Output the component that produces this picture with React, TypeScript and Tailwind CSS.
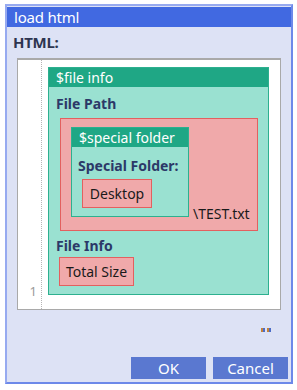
import React from 'react';

const font = { fontFamily: '"Noto Sans", "Open Sans", sans-serif' };

// teal block with a header strip
const Block = ({ title, className, children }: { title: string; className?: string; children: React.ReactNode }) => (
  <div className={`border border-[#2db08f] bg-[#9ae1d1] ${className ?? ''}`}>
    <div className="h-[19px] bg-[#1fa785] pl-[7px] text-[14px] leading-[19px] text-white">{title}</div>
    {children}
  </div>
);

const Chip = ({ label, className }: { label: string; className?: string }) => (
  <div className={`flex h-[29px] items-center justify-center border border-[#e3605f] bg-[#f0a9aa] text-[14px] text-[#1a1a1a] ${className ?? ''}`}>
    {label}
  </div>
);

const Label = ({ text, className }: { text: string; className?: string }) => (
  <div className={`text-[14px] font-bold leading-[19px] text-[#2c3968] ${className ?? ''}`}>{text}</div>
);

export default function App() {
  return (
    <div className="h-[390px] w-[297px] bg-white pl-[5px] pt-[4px]" style={font}>
      <div className="flex h-[380px] w-[288px] flex-col border-2 border-[#97aaf0] border-b-[#6d89e9] border-r-[#6d89e9] bg-[#dde2f5]">
        {/* title bar */}
        <div className="mt-[1px] h-[20px] bg-[#4169e1] pl-[7px] text-[15px] leading-[20px] tracking-[-0.2px] text-white">load html</div>

        <div className="pl-[6px] pt-[6px] text-[15px] font-bold leading-[19px] tracking-[-0.3px] text-[#2d3550]">HTML:</div>

        {/* editor */}
        <div className="ml-[10px] mt-[6px] flex h-[252px] w-[264px] border border-t-2 border-[#a9a9a9] bg-white">
          <div className="flex w-[24px] items-end justify-end border-r border-dotted border-[#b5b5b5] pb-[10px] pr-[4px] text-[13px] leading-[16px] text-[#9a9a9a]">
            1
          </div>
          <div className="pl-[6px] pt-[7px]">
            <Block title="$file info" className="w-[221px] pb-[8px]">
              <Label text="File Path" className="pl-[7px] pt-[7px]" />
              <div className="ml-[11px] mt-[5px] flex w-[198px] items-start border border-[#e3605f] bg-[#f0a9aa] pb-[13px] pl-[10px] pt-[8px]">
                <Block title="$special folder" className="h-[90px] w-[118px]">
                  <Label text="Special Folder:" className="pl-[6px] pt-[9px]" />
                  <Chip label="Desktop" className="ml-[10px] mt-[4px] w-[70px]" />
                </Block>
                <div className="mb-[-6px] ml-[4px] self-end text-[14px] leading-[19px] text-[#1a1a1a]">\TEST.txt</div>
              </div>
              <Label text="File Info" className="pl-[7px] pt-[5px]" />
              <Chip label="Total Size" className="ml-[10px] mt-[2px] w-[75px]" />
            </Block>
          </div>
        </div>

        {/* small marker */}
        <div className="mr-[20px] mt-[18px] flex justify-end gap-[2px]">
          <div className="flex">
            <span className="h-[4px] w-[2px] bg-[#c4823a]" />
            <span className="h-[4px] w-[2px] bg-[#4a6cc8]" />
          </div>
          <div className="flex">
            <span className="h-[4px] w-[2px] bg-[#c4823a]" />
            <span className="h-[4px] w-[2px] bg-[#4a6cc8]" />
          </div>
        </div>

        {/* buttons */}
        <div className="mt-auto flex justify-end gap-[7px] pb-[3px] pr-[3px]">
          <button className="h-[22px] w-[75px] bg-[#5a78d0] text-[15px] leading-[22px] text-white">OK</button>
          <button className="h-[22px] w-[75px] bg-[#5a78d0] text-[15px] leading-[22px] text-white">Cancel</button>
        </div>
      </div>
    </div>
  );
}
